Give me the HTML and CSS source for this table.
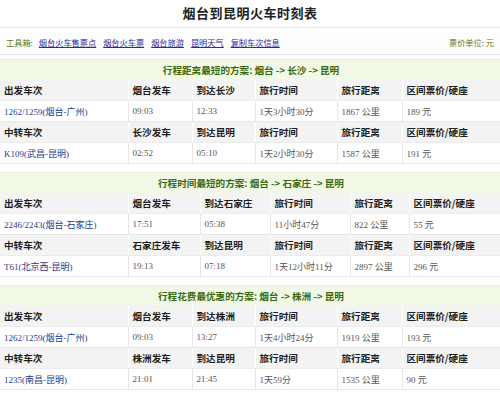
FILE: index.html
```html
<!DOCTYPE html>
<html lang="zh-CN">
<head>
<meta charset="utf-8">
<title>烟台到昆明火车时刻表</title>
<link rel="stylesheet" href="styles.css">
</head>
<body>
<div class="page">
  <h1 class="title">烟台到昆明火车时刻表</h1>
  <div class="toolbar">
    <div class="tools">
      <span class="label">工具箱:</span>
      <a href="#">烟台火车售票点</a>
      <a href="#">烟台火车票</a>
      <a href="#">烟台旅游</a>
      <a href="#">昆明天气</a>
      <a href="#">复制车次信息</a>
    </div>
    <div class="unit">票价单位: 元</div>
  </div>

  <section class="plan">
    <div class="plan-head">行程距离最短的方案: 烟台 -&gt; 长沙 -&gt; 昆明</div>
    <table class="sched sched-a">
      <colgroup><col class="c1"><col class="c2"><col class="c3"><col class="c4"><col class="c5"><col class="c6"></colgroup>
      <tr class="hd"><th>出发车次</th><th>烟台发车</th><th>到达长沙</th><th>旅行时间</th><th>旅行距离</th><th>区间票价/硬座</th></tr>
      <tr><td><a href="#">1262/1259(烟台-广州)</a></td><td>09:03</td><td>12:33</td><td>1天3小时30分</td><td>1867 公里</td><td>189 元</td></tr>
      <tr class="hd"><th>中转车次</th><th>长沙发车</th><th>到达昆明</th><th>旅行时间</th><th>旅行距离</th><th>区间票价/硬座</th></tr>
      <tr><td><a href="#">K109(武昌-昆明)</a></td><td>02:52</td><td>05:10</td><td>1天2小时30分</td><td>1587 公里</td><td>191 元</td></tr>
    </table>
  </section>

  <section class="plan">
    <div class="plan-head">行程时间最短的方案: 烟台 -&gt; 石家庄 -&gt; 昆明</div>
    <table class="sched sched-b">
      <colgroup><col class="c1"><col class="c2"><col class="c3"><col class="c4"><col class="c5"><col class="c6"></colgroup>
      <tr class="hd"><th>出发车次</th><th>烟台发车</th><th>到达石家庄</th><th>旅行时间</th><th>旅行距离</th><th>区间票价/硬座</th></tr>
      <tr><td><a href="#">2246/2243(烟台-石家庄)</a></td><td>17:51</td><td>05:38</td><td>11小时47分</td><td>822 公里</td><td>55 元</td></tr>
      <tr class="hd"><th>中转车次</th><th>石家庄发车</th><th>到达昆明</th><th>旅行时间</th><th>旅行距离</th><th>区间票价/硬座</th></tr>
      <tr><td><a href="#">T61(北京西-昆明)</a></td><td>19:13</td><td>07:18</td><td>1天12小时11分</td><td>2897 公里</td><td>296 元</td></tr>
    </table>
  </section>

  <section class="plan">
    <div class="plan-head">行程花费最优惠的方案: 烟台 -&gt; 株洲 -&gt; 昆明</div>
    <table class="sched sched-a">
      <colgroup><col class="c1"><col class="c2"><col class="c3"><col class="c4"><col class="c5"><col class="c6"></colgroup>
      <tr class="hd"><th>出发车次</th><th>烟台发车</th><th>到达株洲</th><th>旅行时间</th><th>旅行距离</th><th>区间票价/硬座</th></tr>
      <tr><td><a href="#">1262/1259(烟台-广州)</a></td><td>09:03</td><td>13:27</td><td>1天4小时24分</td><td>1919 公里</td><td>193 元</td></tr>
      <tr class="hd"><th>中转车次</th><th>株洲发车</th><th>到达昆明</th><th>旅行时间</th><th>旅行距离</th><th>区间票价/硬座</th></tr>
      <tr><td><a href="#">1235(南昌-昆明)</a></td><td>21:01</td><td>21:45</td><td>1天59分</td><td>1535 公里</td><td>90 元</td></tr>
    </table>
  </section>
</div>
</body>
</html>
```

FILE: styles.css
```css
html, body {
  margin: 0;
  padding: 0;
  background: #ffffff;
}

.page {
  width: 500px;
  font-family: "Liberation Serif", "Noto Sans CJK SC", serif;
  color: #555555;
}

.title {
  margin: 0;
  height: 27px;
  line-height: 26px;
  text-align: center;
  font-family: "Noto Sans CJK SC", sans-serif;
  font-size: 13px;
  font-weight: bold;
  color: #222222;
  letter-spacing: 0.5px;
}

.toolbar {
  display: flex;
  justify-content: space-between;
  align-items: center;
  height: 24px;
  padding: 2px 6px 0 6px;
  border-top: 1px solid #e4e4e4;
  border-bottom: 1px solid #e4e4e4;
  background: #fdfdfd;
  font-family: "Noto Sans CJK SC", sans-serif;
  font-size: 8.2px;
  margin-bottom: 4px;
}

.tools {
  display: flex;
  gap: 7px;
  align-items: center;
}

.tools .label,
.unit {
  color: #5a7a20;
}

.tools .label {
  margin-right: -1px;
}

.tools a {
  color: #2a2aa0;
  text-decoration: underline;
}

.plan {
  margin-bottom: 8px;
}

.plan-head {
  height: 20px;
  line-height: 21px;
  background: #f1f8e6;
  border-top: 1px solid #e6efd8;
  text-align: center;
  font-family: "Noto Sans CJK SC", sans-serif;
  font-size: 9.6px;
  font-weight: bold;
  color: #3a6a10;
  padding-left: 2px;
}

.sched {
  width: 500px;
  border-collapse: collapse;
  table-layout: fixed;
}

.sched th,
.sched td {
  height: 20px;
  padding: 0 0 0 4px;
  text-align: left;
  white-space: nowrap;
  overflow: hidden;
  vertical-align: middle;
}

.sched th {
  background: #f3f3f3;
  font-family: "Noto Sans CJK SC", sans-serif;
  font-size: 9.6px;
  font-weight: bold;
  color: #1e1e1e;
  border-right: 1px solid #ffffff;
  border-bottom: 1px solid #ececec;
}

.sched td {
  background: #ffffff;
  font-size: 9px;
  color: #555555;
  border-right: 1px solid #e6e6e6;
  border-bottom: 1px solid #e6e6e6;
}

.sched th:last-child,
.sched td:last-child {
  border-right: none;
}

.sched td a {
  color: #2a3a8c;
  text-decoration: none;
}

.sched-a .c1 { width: 128px; }
.sched-a .c2 { width: 64px; }
.sched-a .c3 { width: 63px; }
.sched-a .c4 { width: 82px; }
.sched-a .c5 { width: 65px; }
.sched-a .c6 { width: 98px; }

.sched-b .c1 { width: 128px; }
.sched-b .c2 { width: 72px; }
.sched-b .c3 { width: 70px; }
.sched-b .c4 { width: 80px; }
.sched-b .c5 { width: 59px; }
.sched-b .c6 { width: 91px; }
```
